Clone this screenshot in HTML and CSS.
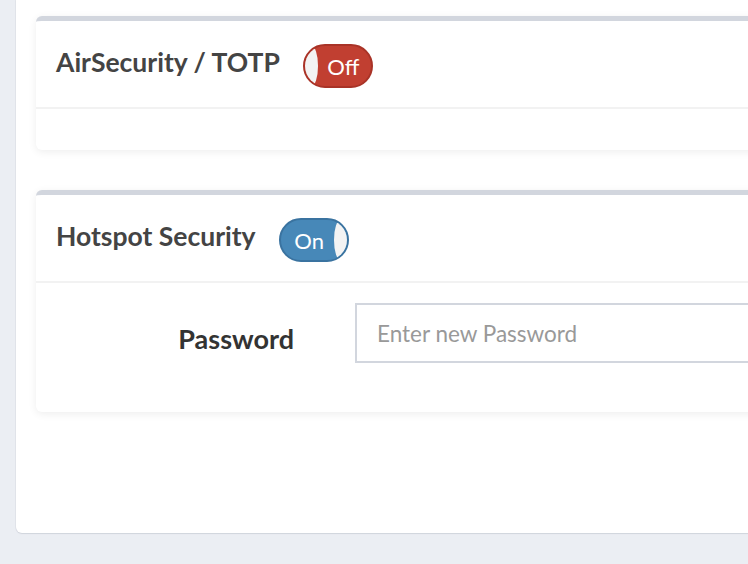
FILE: index.html
```html
<!DOCTYPE html>
<html lang="en">
<head>
    <meta charset="UTF-8">
    <meta name="viewport" content="width=device-width, initial-scale=1.0">
    <title>Security Settings</title>
    <link rel="stylesheet" href="styles.css">
</head>
<body>
    <div class="content">
        <div class="box">
            <div class="box-header">
                <h3 class="box-title">AirSecurity / TOTP</h3>
                <span class="toggle off"><span class="knob"></span><span class="toggle-label">Off</span></span>
            </div>
            <div class="box-body empty"></div>
        </div>

        <div class="box">
            <div class="box-header">
                <h3 class="box-title">Hotspot Security</h3>
                <span class="toggle on"><span class="toggle-label">On</span><span class="knob"></span></span>
            </div>
            <div class="box-body">
                <div class="form-row">
                    <label for="password">Password</label>
                    <input type="password" id="password" placeholder="Enter new Password">
                </div>
            </div>
        </div>
    </div>
</body>
</html>
```

FILE: styles.css
```css
html, body {
    margin: 0;
    padding: 0;
    overflow: hidden;
}
body {
    font-family: Lato, "Noto Sans", sans-serif;
    background: #ebeef3;
    width: 748px;
    height: 564px;
}
.content {
    background: white;
    margin-left: 16px;
    width: 800px;
    padding: 16px 0 121px 20px;
    border-radius: 0 0 0 6px;
    box-shadow: 0 1px 1px #d0d4dc, -1px 0 0 #e2e5ea;
}
.box {
    background: white;
    border-top: 5px solid #d2d6de;
    border-radius: 6px;
    box-shadow: 0 2px 8px rgba(0,0,0,0.07);
    margin-bottom: 40px;
}
.box:last-child {
    margin-bottom: 0;
}
.box-header {
    display: flex;
    align-items: center;
    gap: 23px;
    height: 86px;
    padding: 0 20px;
    border-bottom: 2px solid #f2f2f2;
}
.box-title {
    margin: 0 0 4px;
    font-size: 26.5px;
    font-weight: bold;
    color: #444;
}
.toggle {
    display: flex;
    align-items: center;
    width: 70px;
    height: 44px;
    margin-top: 4px;
    box-sizing: border-box;
    border-radius: 22px;
    overflow: hidden;
    color: white;
    font-size: 22px;
}
.toggle.off {
    background: #c13f31;
    border: 2px solid #a93327;
}
.toggle.on {
    background: #4788b8;
    border: 2px solid #3a73a0;
}
.toggle-label {
    flex: 1;
    text-align: center;
}
.toggle.off .toggle-label {
    padding-right: 2px;
}
.toggle.on .toggle-label {
    padding-left: 4px;
}
.knob {
    width: 13px;
    height: 100%;
    background: #f3f3f3;
}
.toggle.off .knob {
    border-radius: 0 50% 50% 0 / 0 50% 50% 0;
}
.toggle.on .knob {
    border-radius: 50% 0 0 50% / 50% 0 0 50%;
}
.box-body {
    padding: 20px 0 49px;
}
.box-body.empty {
    padding: 0;
    height: 41px;
}
.form-row {
    display: grid;
    grid-template-columns: 258px 1fr;
    column-gap: 61px;
    align-items: center;
}
.form-row label {
    text-align: right;
    font-size: 27px;
    font-weight: bold;
    color: #333;
    padding-top: 10px;
}
.form-row input {
    height: 60px;
    box-sizing: border-box;
    border: 2px solid #d2d6de;
    padding: 0 20px;
    font-family: inherit;
    font-size: 22.5px;
    color: #555;
}
.form-row input::placeholder {
    color: #999;
}
```
